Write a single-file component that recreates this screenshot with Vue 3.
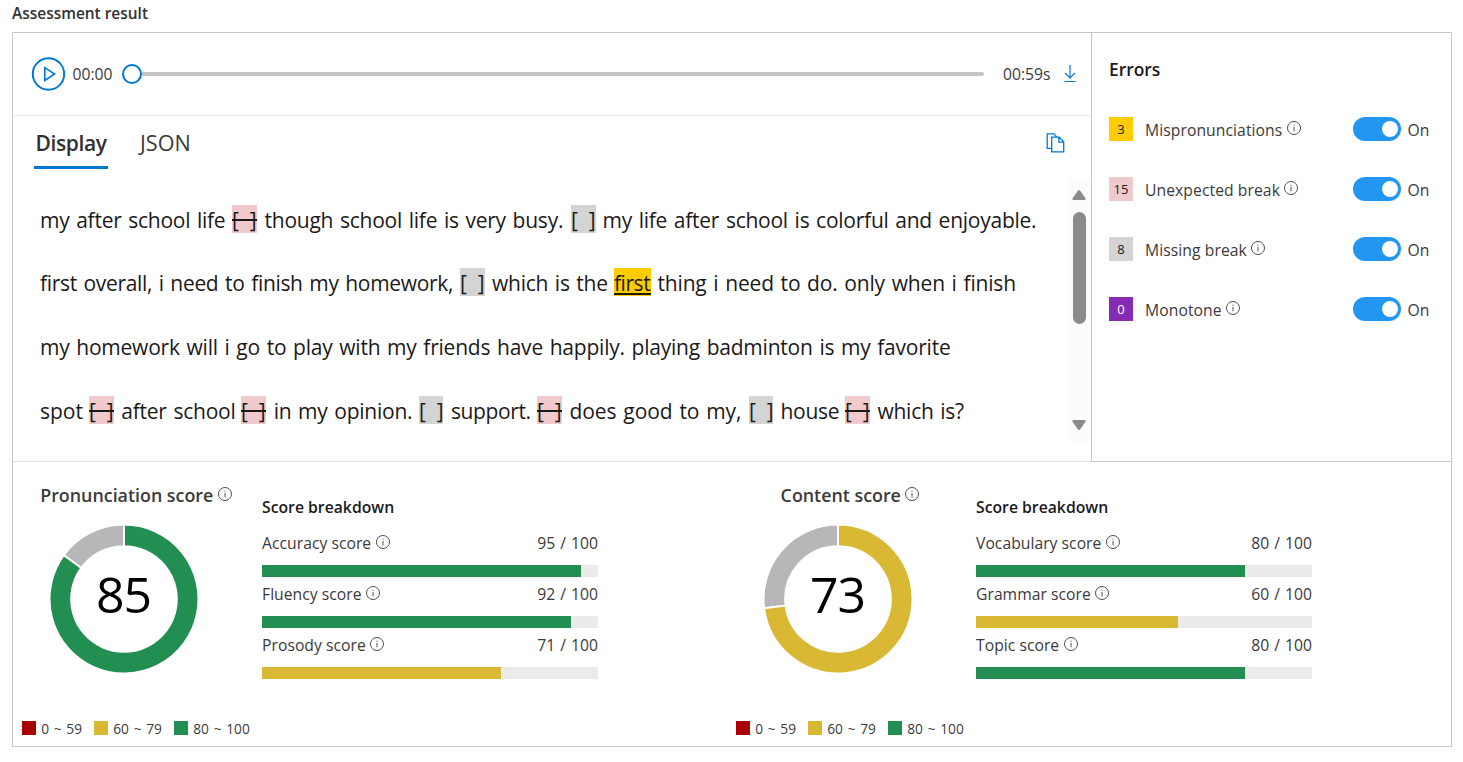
<script setup>
import { h } from 'vue'

const InfoIcon = () =>
  h('svg', { class: 'info', width: 14, height: 14, viewBox: '0 0 14 14', fill: 'none', stroke: '#484644' }, [
    h('circle', { cx: 7, cy: 7, r: 6.5, 'stroke-width': 0.95 }),
    h('path', { d: 'M7 6v4.3M7 3.7v1.1', 'stroke-width': 0.95 })
  ])

const t = (text, width, track = 0) => ({ kind: 'word', text, width, track })
const unexpected = (width) => ({ kind: 'unexpected', text: '[  ]', width })
const missing = (width) => ({ kind: 'missing', text: '[  ]', width })

const lines = [
  [t('my after school life', 192, -0.25), unexpected(32.5), t('though school life is very busy.', 306.5, -0.24), missing(31.5), t('my life after school is colorful and enjoyable.', 440, -0.25)],
  [t('first overall, i need to finish my homework,', 420, -0.32), missing(32), t('which is the', 122, -0.25), { kind: 'wrong', text: 'first', width: 43.5 }, t('thing i need to do. only when i finish', 370, -0.18)],
  [t('my homework will i go to play with my friends have happily. playing badminton is my favorite', 930, -0.22)],
  [t('spot', 49), unexpected(32.2), t('after school', 119.8, -0.22), unexpected(32.7), t('in my opinion.', 145.3, -0.24), missing(32), t('support.', 86, -0.38), unexpected(32.5), t('does good to my,', 179.5, -0.08), missing(31.5), t('house', 64.5, -0.3), unexpected(32.5), t('which is?', 100, -0.25)]
]

const errors = [
  { count: 3, label: 'Mispronunciations', tone: 'yellow' },
  { count: 15, label: 'Unexpected break', tone: 'pink' },
  { count: 8, label: 'Missing break', tone: 'grey' },
  { count: 0, label: 'Monotone', tone: 'purple' }
]

const GREEN = '#238e51'
const GOLD = '#d9b934'
const toneFor = (v) => (v >= 80 ? GREEN : v >= 60 ? GOLD : '#a80000')

const groups = [
  { title: 'Pronunciation score', value: 85, rows: [['Accuracy score', 95], ['Fluency score', 92], ['Prosody score', 71]] },
  { title: 'Content score', value: 73, rows: [['Vocabulary score', 80], ['Grammar score', 60], ['Topic score', 80]] }
]

const point = (r, pct) => {
  const a = (pct / 100) * Math.PI * 2
  return `${(74 + r * Math.sin(a)).toFixed(2)} ${(74 - r * Math.cos(a)).toFixed(2)}`
}
const slice = (from, to) => {
  const large = to - from > 50 ? 1 : 0
  return `M${point(74.5, from)}A74.5 74.5 0 ${large} 1 ${point(74.5, to)}L${point(52.8, to)}A52.8 52.8 0 ${large} 0 ${point(52.8, from)}Z`
}
</script>

<template>
  <main class="page">
    <h1 class="page-title">Assessment result</h1>
    <div class="card">
      <div class="top">
        <section class="left">
          <div class="player">
            <svg class="play" width="34" height="34" viewBox="0 0 34 34" fill="none" stroke="#0078d4">
              <circle cx="17.5" cy="17" r="15.7" stroke-width="2" />
              <path d="M13.8 10.7v12.8L23.6 17z" stroke-width="1.6" />
            </svg>
            <span class="time">00:00</span>
            <div class="slider"><span class="thumb"></span><span class="rail"></span></div>
            <span class="time end">00:59s</span>
            <svg class="download" width="12" height="18" viewBox="0 0 12 18" fill="none" stroke="#0078d4" stroke-width="1.2">
              <path d="M6 0v13M1 8l5 5 5-5M.5 16.5h11" />
            </svg>
          </div>
          <div class="tabs">
            <span class="tab active">Display</span>
            <span class="tab">JSON</span>
            <svg class="copy" width="19" height="20" viewBox="0 0 19 20" fill="none" stroke="#0078d4" stroke-width="1.3">
              <path d="M5.3 15.3H1.2V.8h6.6l3.1 3.1M5.7 18.8V4.1h7.4l4.6 4.7v10zM12.8 4.1v5h4.9" />
            </svg>
          </div>
          <div class="scroller">
            <div class="transcript">
              <div v-for="(line, i) in lines" :key="i" class="line">
                <span v-for="(tok, j) in line" :key="j" class="slot" :style="{ width: tok.width + 'px', letterSpacing: (tok.track || 0) + 'px' }"><span class="token" :class="tok.kind">{{ tok.text }}</span></span>
              </div>
            </div>
            <div class="scrollbar">
              <svg class="arrow" width="14" height="10" viewBox="0 0 14 10"><path d="M6 .6 .5 8.2Q0 10 1.6 10h10.8q1.6 0 1.1-1.8L8 .6Q7-.4 6 .6z" fill="#8b8b8b" /></svg>
              <span class="grip"></span>
              <svg class="arrow down" width="14" height="10" viewBox="0 0 14 10"><path d="M6 9.4.5 1.8Q0 0 1.6 0h10.8q1.6 0 1.1 1.8L8 9.4q-1 1-2 0z" fill="#8b8b8b" /></svg>
            </div>
          </div>
        </section>
        <aside class="errors">
          <h2 class="errors-title">Errors</h2>
          <div v-for="e in errors" :key="e.label" class="error">
            <span class="count" :class="e.tone">{{ e.count }}</span>
            <span class="label">{{ e.label }}<InfoIcon /></span>
            <span class="switch"><span class="knob"></span></span>
            <span class="on">On</span>
          </div>
        </aside>
      </div>
      <div class="scores">
        <section v-for="g in groups" :key="g.title" class="group">
          <div class="summary">
            <h2 class="group-title">{{ g.title }}<InfoIcon /></h2>
            <svg class="donut" width="148" height="148" viewBox="0 0 148 148" stroke="#fff" stroke-width="2">
              <path :d="slice(g.value, 100)" fill="#b7b7b7" />
              <path :d="slice(0, g.value)" :fill="toneFor(g.value)" />
              <text class="value" x="73.5" y="88" text-anchor="middle">{{ g.value }}</text>
            </svg>
            <div class="legend">
              <span class="key low"><i></i><b>0 ~ 59</b></span>
              <span class="key mid"><i></i><b>60 ~ 79</b></span>
              <span class="key high"><i></i><b>80 ~ 100</b></span>
            </div>
          </div>
          <div class="breakdown">
            <h3 class="breakdown-title">Score breakdown</h3>
            <div v-for="[name, v] in g.rows" :key="name" class="metric">
              <div class="metric-head"><span class="label">{{ name }}<InfoIcon /></span><span class="points">{{ v }} / 100</span></div>
              <div class="bar"><div class="fill" :style="{ width: v + '%', background: toneFor(v) }"></div></div>
            </div>
          </div>
        </section>
      </div>
    </div>
  </main>
</template>

<style>
body { background: #fff; }
</style>

<style scoped>
.page { width: 1463px; height: 762px; box-sizing: border-box; padding-left: 12px; font-family: "Open Sans", "Noto Sans", sans-serif; font-size: 15.7px; color: #3b3a39; }
h1, h2, h3 { margin: 0; font-weight: 600; }
.page-title { font-size: 15.45px; line-height: 26px; height: 32px; color: #323130; }
.card { width: 1440px; height: 715px; box-sizing: border-box; border: 1px solid #c8c8c8; }
.top { display: flex; height: 429px; }
.left { width: 1078px; height: 428px; border-bottom: 1px solid #e1e1e1; display: flex; flex-direction: column; }
.player { display: flex; align-items: center; height: 82px; padding-left: 18px; border-bottom: 1px solid #eaeaea; }
.play { flex: none; }
.time { width: 49.5px; margin-left: 7.5px; line-height: 20px; }
.time.end { width: 61px; margin-left: 19px; }
.slider { display: flex; align-items: center; width: 862px; }
.thumb { width: 16px; height: 16px; flex: none; border: 2px solid #0078d4; border-radius: 50%; }
.rail { flex: 1; height: 4px; background: #c8c6c4; border-radius: 0 2px 2px 0; }
.download { flex: none; margin-top: -1px; }
.tabs { display: flex; height: 53px; padding-left: 21px; }
.tab { font-size: 21.6px; line-height: 54px; margin-left: 32px; }
.tab.active { box-sizing: border-box; width: 74px; height: 53px; padding-left: 1.5px; margin-left: 0; font-size: 21px; font-weight: 600; letter-spacing: -0.4px; color: #323130; border-bottom: 3px solid #0078d4; }
.copy { margin: 16.5px 26.5px 0 auto; }
.scroller { display: flex; margin-top: 9px; height: 264px; }
.transcript { width: 1028px; padding: 9px 0 0 27px; font-size: 21px; word-spacing: 1.5px; color: #1b1a19; }
.line { display: flex; align-items: center; height: 63.67px; white-space: pre; }
.slot { flex: none; display: flex; }
.token { position: relative; flex: none; box-sizing: border-box; height: 28px; padding-top: 2px; line-height: 27px; }
.unexpected { width: 25px; background: #efc9cb; word-spacing: 0; }
.missing { width: 24.5px; background: #d4d4d4; word-spacing: 0; }
.wrong { width: 36.5px; background: #fc0; letter-spacing: -0.45px; }
.unexpected::after, .wrong::after { content: ""; position: absolute; left: 0; right: 0; top: 14px; height: 2px; background: #1b1a19; }
.wrong::after { top: 25px; }
.scrollbar { display: flex; flex-direction: column; align-items: center; box-sizing: border-box; width: 23px; padding: 12px 0; background: #fcfcfc; }
.arrow { margin-right: 0.5px; }
.grip { width: 13px; height: 112px; margin-top: 12px; border-radius: 6.5px; background: #8b8b8b; }
.down { margin-top: auto; }
.errors { box-sizing: border-box; width: 360px; height: 429px; border-left: 1px solid #c8c8c8; border-bottom: 1px solid #c8c8c8; padding: 24px 21px 0 17px; }
.errors-title { font-size: 17.4px; line-height: 24px; color: #1b1a19; margin-bottom: 36px; }
.error { display: flex; align-items: center; height: 24px; margin-bottom: 36px; }
.count { width: 24px; height: 24px; margin-right: 12px; text-align: center; font-size: 13px; line-height: 25px; color: #1b1a19; }
.yellow { background: #fc0; }
.pink { background: #efc9cb; }
.grey { background: #d4d4d4; }
.purple { background: #842cb6; color: #fff; }
.label { display: flex; align-items: center; letter-spacing: 0.03px; }
.error .label { width: 208px; line-height: 26px; padding-top: 1px; letter-spacing: 0.07px; }
.info { flex: none; margin: -3px 0 0 4.5px; }
.switch { display: flex; align-items: center; justify-content: flex-end; box-sizing: border-box; width: 48px; height: 24px; padding-right: 3.5px; border-radius: 12px; background: #2196f3; }
.knob { width: 16px; height: 16px; border-radius: 50%; background: #fff; }
.on { margin-left: 6.5px; padding-top: 1px; }
.scores { display: flex; }
.group { display: flex; width: 714px; padding-top: 21px; }
.summary { width: 228px; margin-left: 9px; }
.group-title { display: flex; align-items: center; justify-content: center; font-size: 17.85px; line-height: 24px; }
.donut { display: block; margin: 18px 0 0 28px; }
.value { font-size: 50px; letter-spacing: -1px; fill: #000; stroke: none; }
.legend { display: flex; gap: 12px; margin-top: 45px; font-size: 13.7px; line-height: 20px; word-spacing: 1.2px; }
.key { display: flex; align-items: center; white-space: nowrap; }
.key i { width: 14px; height: 14px; margin-right: 5.3px; }
.key b { font-weight: 400; padding-top: 1px; margin-bottom: -1px; }
.low { width: 60px; }
.mid { width: 68px; }
.high { width: 76px; }
.low i { background: #a80000; }
.mid i { background: #d9b934; }
.high i { background: #238e51; }
.breakdown { width: 336px; margin: 14px 0 0 12px; }
.breakdown-title { font-size: 15.75px; line-height: 20px; margin-bottom: 16px; color: #1b1a19; }
.metric { margin-bottom: 7px; }
.metric-head { display: flex; justify-content: space-between; line-height: 20px; margin-bottom: 12px; }
.points { font-size: 15.7px; word-spacing: 1px; }
.bar { height: 12px; background: #ebebe9; }
.fill { height: 12px; }
</style>
